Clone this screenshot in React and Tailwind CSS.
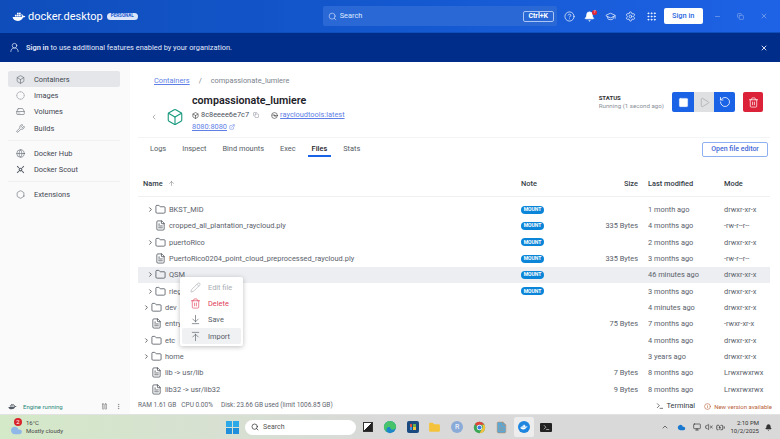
import React from 'react';
import {
  Search, CircleHelp, Bell, GraduationCap, Settings, Grip, Minus, Copy, X, UserRound, Box, CircleDashed, HardDrive,
  Wrench, Globe, Hexagon, ChevronLeft, ChevronRight, ArrowUp, Folder, FileText, Square, Play, RotateCw,
  Trash2, Pencil, ArrowDownToLine, ArrowUpToLine, ExternalLink, Pause, EllipsisVertical, Terminal, Info, ChevronUp, Cloud,
  Monitor, VolumeX, BatteryCharging, Disc3
} from 'lucide-react';

const Whale = ({ className, fill = '#fff' }) => (
  <svg viewBox="0 0 24 18" className={className} fill={fill}>
    <rect x="5" y="6" width="3" height="3" />
    <rect x="8.5" y="6" width="3" height="3" />
    <rect x="12" y="6" width="3" height="3" />
    <rect x="8.5" y="2.5" width="3" height="3" />
    <rect x="12" y="2.5" width="3" height="3" />
    <path d="M1 10h15.5c.6-1.6.2-3.4-.6-4.6l1-.7c1 .8 1.7 1.9 1.9 3 1.400-.4 3-.2 4.200.8-.9 1.600-2.500 2.100-4.200 2-1.300 3.800-4.800 6-9 6C4.500 16.500 1.500 14 1 10z" />
  </svg>
);

const ScoutIcon = ({ className }) => (
  <svg viewBox="0 0 12 12" className={className} fill="none" stroke="currentColor" strokeWidth="1.400">
    <circle cx="6" cy="6" r="1.800" />
    <path d="M1.500 1.500l2.500 2.500M10.500 1.500L8 4M1.500 10.500L4 8M10.500 10.500L8 8" />
  </svg>
);

// Edge browser swirl, small enough that a rough drawing reads fine
const EdgeLogo = () => (
  <svg viewBox="0 0 16 16" className="w-[14px] h-[14px]">
    <circle cx="8" cy="8" r="7" fill="#1c86c8" />
    <path d="M1 8a7 7 0 0 1 14 0c0 2-2 3-4 3-3 0-2-3-4-3-3 0-4 3-2 6a7 7 0 0 1-4-6z" fill="#47c46a" />
  </svg>
);

const ChromeLogo = () => (
  <svg viewBox="0 0 16 16" className="w-[13px] h-[13px]">
    <circle cx="8" cy="8" r="7" fill="#3aa757" />
    <path d="M8 1a7 7 0 0 1 6.060 3.500H8a3.500 3.500 0 0 0-3.200 2L2.400 3.700A7 7 0 0 1 8 1z" fill="#e0443a" />
    <path d="M14.060 4.500A7 7 0 0 1 8 15l3-5.200a3.500 3.500 0 0 0 0-5.300z" fill="#f5c33b" />
    <circle cx="8" cy="8" r="3.300" fill="#fff" />
    <circle cx="8" cy="8" r="2.500" fill="#3d7fe0" />
  </svg>
);

const navTop = [
  { label: 'Containers', Icon: Box, active: true },
  { label: 'Images', Icon: CircleDashed },
  { label: 'Volumes', Icon: HardDrive },
  { label: 'Builds', Icon: Wrench },
];

const files = [
  { name: 'BKST_MID', dir: true, mount: true, modified: '1 month ago', mode: 'drwxr-xr-x' },
  { name: 'cropped_all_plantation_raycloud.ply', mount: true, size: '335 Bytes', modified: '4 months ago', mode: '-rw-r--r--' },
  { name: 'puertoRico', dir: true, mount: true, modified: '2 months ago', mode: 'drwxr-xr-x' },
  { name: 'PuertoRico0204_point_cloud_preprocessed_raycloud.ply', mount: true, size: '335 Bytes', modified: '3 months ago', mode: '-rw-r--r--' },
  { name: 'QSM', dir: true, mount: true, modified: '46 minutes ago', mode: 'drwxr-xr-x', selected: true },
  { name: 'riegl', dir: true, mount: true, modified: '3 months ago', mode: 'drwxr-xr-x' },
  { name: 'dev', dir: true, top: true, modified: '4 minutes ago', mode: 'drwxr-xr-x' },
  { name: 'entrypoint.sh', top: true, size: '75 Bytes', modified: '7 months ago', mode: '-rwxr-xr-x' },
  { name: 'etc', dir: true, top: true, modified: '4 months ago', mode: 'drwxr-xr-x' },
  { name: 'home', dir: true, top: true, modified: '3 years ago', mode: 'drwxr-xr-x' },
  { name: 'lib -> usr/lib', top: true, size: '7 Bytes', modified: '8 months ago', mode: 'Lrwxrwxrwx' },
  { name: 'lib32 -> usr/lib32', top: true, size: '9 Bytes', modified: '8 months ago', mode: 'Lrwxrwxrwx' },
];

const gridCols = 'grid grid-cols-[383px_60px_67px_76px_1fr] items-center';

const FileRow = ({ file }) => (
  <div className={`${gridCols} h-[16.33px] text-[7.4px] text-[#5a616b] ${file.selected ? 'bg-[#eceef1]' : ''}`}>
    <div className={`flex items-center whitespace-nowrap ${file.top ? 'pl-[5px]' : 'pl-[9px]'}`}>
      <span className="w-[8px] shrink-0">
        {file.dir && <ChevronRight size={7} strokeWidth={2.5} className="text-[#333]" />}
      </span>
      {file.dir
        ? <Folder size={11} strokeWidth={1.5} className="text-[#333b45] shrink-0" />
        : <FileText size={11} strokeWidth={1.5} className="text-[#333b45] shrink-0" />}
      <span className="ml-[3px]">{file.name}</span>
    </div>
    <div>
      {file.mount && (
        <span className="flex items-center justify-center w-[23px] h-[8px] rounded-full bg-[#0a85d8] text-white text-[5px] font-bold">
          MOUNT
        </span>
      )}
    </div>
    <div className="text-right pr-[10px] whitespace-nowrap">{file.size}</div>
    <div className="whitespace-nowrap">{file.modified}</div>
    <div className="whitespace-nowrap">{file.mode}</div>
  </div>
);

const MenuItem = ({ Icon, label, className, active }) => (
  <div className={`flex items-center h-[16.33px] px-[8px] rounded-[2px] text-[7.4px] whitespace-nowrap ${className} ${active ? 'bg-[#f0f1f3]' : ''}`}>
    <Icon size={11} strokeWidth={1.4} className="mr-[7px] shrink-0" />
    {label}
  </div>
);

const TaskIcon = ({ children, className = '' }) => (
  <div className={`flex items-center justify-center w-[20px] h-[20px] shrink-0 ${className}`}>{children}</div>
);

export default function App() {
  return (
    <div className="w-[780px] h-[439px] overflow-hidden flex flex-col bg-white font-['Roboto',sans-serif]">
      {/* Title bar */}
      <div className="h-[32px] shrink-0 flex items-center pl-[12px] bg-gradient-to-r from-[#0f4dbb] via-[#1458cf] to-[#1e62e6] text-white">
        <Whale className="w-[14px] h-[11px]" />
        <span className="ml-[2px] text-[11px] leading-none">docker.desktop</span>
        <span className="ml-[4px] flex items-center justify-center w-[31px] h-[7px] rounded-full bg-[#dbe6fa] text-[#1458cf] text-[4.5px] font-bold">PERSONAL</span>
        <div className="ml-[185px] w-[234px] h-[20px] rounded-[2px] bg-[#2a68d6] flex items-center pl-[5px] pr-[3px]">
          <Search size={9} strokeWidth={1.6} className="text-[#dde8ff]" />
          <span className="ml-[3px] text-[7.4px] text-[#dde8ff]">Search</span>
          <span className="ml-auto w-[31px] h-[11px] flex items-center justify-center rounded-[2px] border border-[#a9c4f5] text-[7px] font-bold">Ctrl+K</span>
        </div>
        <div className="ml-[7px] flex items-center gap-[9.500px] text-white">
          <CircleHelp size={11} strokeWidth={1.5} />
          <div className="relative">
            <Bell size={11} strokeWidth={1.8} fill="#fff" />
            <span className="absolute -top-[1px] -right-[2px] w-[5px] h-[5px] rounded-full bg-[#e0263a] text-[3.5px] leading-[5px] text-center">7</span>
          </div>
          <GraduationCap size={11} strokeWidth={1.5} />
          <Settings size={11} strokeWidth={1.5} />
          <Grip size={11} strokeWidth={2} />
        </div>
        <div className="ml-[7px] w-[39px] h-[16px] rounded-[2px] bg-white text-[#2a68e0] text-[7.4px] font-medium flex items-center justify-center">Sign in</div>
        <div className="ml-[11px] flex items-center gap-[16px] text-[#8fb0ee]">
          <Minus size={7} />
          <Copy size={7} />
          <X size={8} />
        </div>
      </div>

      {/* Sign in banner */}
      <div className="h-[30px] shrink-0 flex items-center pl-[9px] pr-[12px] bg-[#002d8a] text-[#e4eafa] text-[7.4px] border-t border-[#0f4dbb]">
        <UserRound size={11} strokeWidth={1.5} className="mr-[6px]" />
        <span><span className="font-semibold">Sign in</span> to use additional features enabled by your organization.</span>
        <X size={8} strokeWidth={2.5} className="ml-auto text-white" />
      </div>

      <div className="flex-1 flex min-h-0">
        {/* Sidebar */}
        <div className="w-[130px] shrink-0 bg-[#fafafb] pt-[9px] pl-[8px] pr-[10px] text-[7.4px] text-[#3f4650]">
          {navTop.map(({ label, Icon, active }) => (
            <div key={label} className={`flex items-center h-[16.33px] pl-[8px] rounded-[2px] ${active ? 'bg-[#e4e6ea]' : ''}`}>
              <Icon size={9} strokeWidth={1.5} className="mr-[9px] text-[#555c66]" />
              {label}
            </div>
          ))}
          <div className="h-px bg-[#f0f0f2] my-[3.800px]" />
          <div className="flex items-center h-[16.33px] pl-[8px]">
            <Globe size={9} strokeWidth={1.5} className="mr-[9px] text-[#555c66]" />
            Docker Hub
          </div>
          <div className="flex items-center h-[16.33px] pl-[8px]">
            <ScoutIcon className="w-[9px] h-[9px] mr-[9px] text-[#555c66]" />
            Docker Scout
          </div>
          <div className="h-px bg-[#f0f0f2] my-[3.800px]" />
          <div className="flex items-center h-[16.33px] pl-[8px]">
            <Hexagon size={9} strokeWidth={1.5} className="mr-[9px] text-[#555c66]" />
            Extensions
          </div>
        </div>

        {/* Main */}
        <div className="relative flex-1 min-w-0 overflow-hidden pl-[8px] pr-[10px]">
          <div className="pl-[16px] pt-[13px] h-[30px] text-[7.4px] text-[#7b828c] whitespace-nowrap">
            <span className="text-[#5f7fe6] underline">Containers</span>
            <span className="mx-[9px]">/</span>
            <span>compassionate_lumiere</span>
          </div>

          <div className="h-[45px] flex items-start">
            <ChevronLeft size={8} strokeWidth={1.5} className="ml-[12px] mt-[21px] text-[#666]" />
            <Box size={18} strokeWidth={1.5} className="ml-[8px] mt-[16px] text-[#1a9a80]" />
            <div className="ml-[8px] pt-[1px]">
              <div className="text-[10.7px] leading-[16px] font-semibold text-[#1d2129] whitespace-nowrap">compassionate_lumiere</div>
              <div className="flex items-center h-[12px] text-[7.4px] text-[#4b525c] whitespace-nowrap">
                <Box size={7} strokeWidth={2} className="mr-[2px] text-[#333]" />
                8c8eeee6e7c7
                <Copy size={6} className="ml-[4px] text-[#8a8f98]" />
                <Disc3 size={7} strokeWidth={2} className="ml-[12px] mr-[2px] text-[#333]" />
                <span className="text-[#5f7fe6] underline">raycloudtools:latest</span>
              </div>
              <div className="flex items-center h-[12px] text-[7.4px] text-[#5f7fe6] whitespace-nowrap">
                <span className="underline">8080:8080</span>
                <ExternalLink size={6} className="ml-[2px]" />
              </div>
            </div>
            <div className="ml-auto flex items-start">
              <div className="mt-[1px] mr-[8px] text-[6.200px] leading-[9px] whitespace-nowrap">
                <div className="font-bold text-[#333] text-[6px]">STATUS</div>
                <div className="text-[#8a8f98]">Running (1 second ago)</div>
              </div>
              <div className="flex h-[20px] rounded-[2px] overflow-hidden">
                <div className="w-[22px] bg-[#1a62e6] flex items-center justify-center">
                  <Square size={11} fill="#fff" strokeWidth={1} className="text-white" />
                </div>
                <div className="w-[20px] bg-[#dfe0e2] flex items-center justify-center">
                  <Play size={11} strokeWidth={1.3} className="text-[#9a9da3]" />
                </div>
                <div className="w-[21px] bg-[#1a62e6] flex items-center justify-center">
                  <RotateCw size={12} strokeWidth={1.6} className="text-white -scale-x-100" />
                </div>
              </div>
              <div className="ml-[8px] mr-[7px] w-[20px] h-[20px] rounded-[2px] bg-[#dc2238] flex items-center justify-center">
                <Trash2 size={11} strokeWidth={1.6} className="text-white" />
              </div>
            </div>
          </div>

          <div className="h-px bg-[#f3f4f5]" />

          <div className="h-[20px] flex items-start pl-[12px] pr-[2px] text-[7.4px] text-[#555c66] whitespace-nowrap">
            <div className="flex gap-[16px] pt-[5px]">
              <span>Logs</span>
              <span>Inspect</span>
              <span>Bind mounts</span>
              <span>Exec</span>
              <span className="relative font-medium text-[#1d2129]">
                Files
                <span className="absolute left-[-4px] right-[-4px] top-[12px] h-[1.500px] bg-[#1a62e6]" />
              </span>
              <span>Stats</span>
            </div>
            <div className="ml-auto mt-[4px] w-[66px] h-[15px] rounded-[2px] border border-[#8fb0f0] text-[#3f68d8] text-[7px] font-medium flex items-center justify-center">
              Open file editor
            </div>
          </div>

          <div className={`${gridCols} h-[39px] pt-[13px] text-[7.4px] font-medium text-[#333b45] border-b border-[#eef0f2]`}>
            <div className="pl-[5px] flex items-center">
              Name
              <ArrowUp size={7} strokeWidth={1.5} className="ml-[5px] text-[#666]" />
            </div>
            <div>Note</div>
            <div className="text-right pr-[10px]">Size</div>
            <div>Last modified</div>
            <div>Mode</div>
          </div>

          <div className="pt-[4.500px]">
            {files.map(file => <FileRow key={file.name} file={file} />)}
          </div>

          {/* Context menu */}
          <div className="absolute left-[50px] top-[215px] w-[63px] p-[2px] bg-white rounded-[2px] shadow-[0_1px_5px_rgba(0,0,0,0.25)]">
            <MenuItem Icon={Pencil} label="Edit file" className="text-[#a9adb3]" />
            <MenuItem Icon={Trash2} label="Delete" className="text-[#e0405a]" />
            <MenuItem Icon={ArrowDownToLine} label="Save" className="text-[#555c66]" />
            <MenuItem Icon={ArrowUpToLine} label="Import" className="text-[#555c66]" active />
          </div>
        </div>
      </div>

      {/* Status bar */}
      <div className="h-[16px] shrink-0 flex items-center bg-white text-[6.500px] text-[#5f6670] whitespace-nowrap">
        <div className="w-[130px] h-full shrink-0 bg-[#fafafb] flex items-center pl-[8px]">
          <Whale className="w-[9px] h-[7px]" fill="#555c66" />
          <span className="ml-[6px] text-[#2a8a78] text-[6px]">Engine running</span>
          <Pause size={7} className="ml-[38px] text-[#777]" />
          <EllipsisVertical size={7} className="ml-[7px] text-[#777]" />
        </div>
        <span className="ml-[8px]">RAM 1.61 GB</span>
        <span className="ml-[5px]">CPU 0.00%</span>
        <span className="ml-[8px]">Disk: 23.66 GB used (limit 1006.85 GB)</span>
        <Terminal size={8} className="ml-auto text-[#333]" />
        <span className="ml-[2px] text-[7.4px] text-[#333b45]">Terminal</span>
        <Info size={7} className="ml-[9px] text-[#b8623a]" />
        <span className="ml-[3px] mr-[8px] text-[6px] text-[#b8623a]">New version available</span>
      </div>

      {/* Windows taskbar */}
      <div className="h-[25px] shrink-0 flex items-center bg-gradient-to-r from-[#d4e9c8] via-[#d9d9d9] to-[#d9d9d9] border-t border-[#e2e2e2]">
        <div className="relative ml-[10px] w-[13px] h-[10px] mt-[3px]">
          <Cloud size={13} fill="#8fb8e8" strokeWidth={0} />
          <span className="absolute -top-[6px] left-[4px] w-[8px] h-[8px] rounded-full bg-[#d8232a] text-white text-[6px] leading-[8px] text-center">2</span>
        </div>
        <div className="ml-[3px] text-[6px] leading-[8px] text-[#444] whitespace-nowrap">
          <div>16°C</div>
          <div>Mostly cloudy</div>
        </div>
        <div className="ml-[163px] w-[13px] h-[13px] shrink-0 grid grid-cols-2 gap-[1px]">
          <span className="bg-[#2ba8e8]" />
          <span className="bg-[#2ba8e8]" />
          <span className="bg-[#1f8fdc]" />
          <span className="bg-[#1f8fdc]" />
        </div>
        <div className="ml-[6px] w-[111px] h-[15px] rounded-full bg-white flex items-center pl-[6px] text-[7px] text-[#555]">
          <Search size={8} strokeWidth={2} className="text-[#222] mr-[4px]" />
          Search
        </div>
        <div className="ml-[2px] flex items-center gap-[2.300px]">
          <TaskIcon>
            <span className="w-[10px] h-[10px] bg-gradient-to-br from-white from-50% to-[#222] to-50% border border-[#333]" />
          </TaskIcon>
          <TaskIcon><EdgeLogo /></TaskIcon>
          <TaskIcon>
            <span className="w-[12px] h-[12px] rounded-[2px] bg-[#1b4a80] flex items-center justify-center">
              <span className="w-[6px] h-[6px] grid grid-cols-2 gap-[0.5px]">
                <span className="bg-[#e0503a]" />
                <span className="bg-[#6ab04a]" />
                <span className="bg-[#3d9ae0]" />
                <span className="bg-[#f5c33b]" />
              </span>
            </span>
          </TaskIcon>
          <TaskIcon><Folder size={13} fill="#f5c33b" strokeWidth={0} /></TaskIcon>
          <TaskIcon>
            <span className="w-[12px] h-[12px] rounded-full bg-[#8aaad8] text-white text-[7px] leading-[12px] text-center">R</span>
          </TaskIcon>
          <TaskIcon><ChromeLogo /></TaskIcon>
          <TaskIcon><FileText size={13} fill="#5aa8d8" strokeWidth={1} className="text-[#c98a5a]" /></TaskIcon>
          <TaskIcon className="bg-[#ededed] rounded-[2px]">
            <span className="w-[12px] h-[12px] rounded-full bg-[#1f86e0] flex items-center justify-center">
              <Whale className="w-[8px] h-[6px]" />
            </span>
          </TaskIcon>
          <TaskIcon>
            <span className="w-[12px] h-[9px] rounded-[1px] bg-[#222] flex items-center justify-center">
              <Terminal size={7} className="text-white" />
            </span>
          </TaskIcon>
        </div>
        <div className="ml-auto flex items-center pr-[8px] text-[#333]">
          <ChevronUp size={8} />
          <Cloud size={9} fill="#1b78d0" strokeWidth={0} className="ml-[8px]" />
          <Monitor size={8} className="ml-[7px]" />
          <VolumeX size={8} className="ml-[4px]" />
          <BatteryCharging size={9} className="ml-[3px]" />
          <div className="ml-[5px] text-[6px] leading-[8px] text-right whitespace-nowrap">
            <div>2:10 PM</div>
            <div>10/2/2025</div>
          </div>
          <Bell size={7} fill="#333" className="ml-[6px]" />
        </div>
      </div>
    </div>
  );
}
